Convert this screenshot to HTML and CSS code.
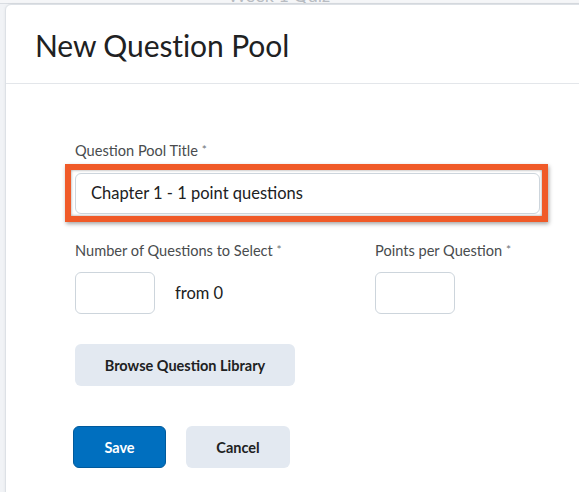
FILE: index.html
```html
<!DOCTYPE html>
<html>
<head>
<meta charset="utf-8">
<link rel="stylesheet" href="styles.css">
</head>
<body>
<div class="page">
  <div class="page-top"><span class="page-title">Week 1 Quiz</span></div>
</div>
<div class="dialog">
  <div class="dialog-header">
    <h1 class="dialog-title">New Question Pool</h1>
  </div>
  <div class="dialog-body">
    <div class="field">
      <label class="label">Question Pool Title <span class="req">*</span></label>
      <div class="highlight">
        <div class="input input-wide">Chapter 1 - 1 point questions</div>
      </div>
    </div>
    <div class="row">
      <div class="field col-left">
        <label class="label">Number of Questions to Select <span class="req">*</span></label>
        <div class="inline">
          <div class="input input-small"></div>
          <span class="from">from 0</span>
        </div>
      </div>
      <div class="field">
        <label class="label">Points per Question <span class="req">*</span></label>
        <div class="input input-small"></div>
      </div>
    </div>
    <button class="btn btn-secondary btn-browse">Browse Question Library</button>
    <div class="actions">
      <button class="btn btn-primary">Save</button>
      <button class="btn btn-secondary btn-cancel">Cancel</button>
    </div>
  </div>
</div>
</body>
</html>
```
FILE: styles.css
```css
* { box-sizing: border-box; }
html, body { margin: 0; padding: 0; }
body {
  width: 579px;
  height: 492px;
  overflow: hidden;
  background: #f1f3f6;
  font-family: Lato, "Noto Sans", sans-serif;
  position: relative;
}
.page-top {
  height: 4px;
  overflow: hidden;
  background: #f5f6f8;
  border-bottom: 1px solid #d9dde2;
}
.page-title {
  display: block;
  margin-left: 228px;
  margin-top: -14px;
  font-size: 18px;
  color: #b8bcc2;
  line-height: 18px;
}
.dialog {
  position: absolute;
  left: 5px;
  top: 4px;
  right: -10px;
  bottom: -10px;
  background: #ffffff;
  border: 1px solid #dde1e6;
  border-radius: 6px;
  box-shadow: 0 0 3px rgba(0,0,0,0.06);
}
.dialog-header {
  height: 79px;
  border-bottom: 1px solid #e3e6ea;
  padding-left: 29px;
  display: flex;
  align-items: center;
}
.dialog-title {
  margin: 0;
  font-weight: 400;
  font-size: 30px;
  color: #202122;
  letter-spacing: -0.1px;
  padding-top: 1px;
}
.dialog-body {
  padding: 57px 0 0 69px;
}
.field { display: flex; flex-direction: column; }
.label {
  font-size: 14.6px;
  color: #494c4e;
  line-height: 17px;
  margin-bottom: 5px;
}
.req { font-size: 12px; color: #6e7477; vertical-align: 2px; }
.highlight {
  width: 483px;
  height: 58px;
  margin-left: -10px;
  border: 6px solid #f05a28;
  box-shadow: 1px 2px 4px rgba(0,0,0,0.35), inset 0 0 3px rgba(0,0,0,0.4);
  padding: 3px 2px 2px 4px;
}
.input {
  background: #ffffff;
  border: 1px solid #cdd5dc;
  border-radius: 6px;
}
.input-wide {
  width: 465px;
  height: 41px;
  padding-left: 15px;
  font-size: 16.5px;
  color: #202122;
  line-height: 39px;
}
.row {
  display: flex;
  margin-top: 19px;
}
.col-left { width: 300px; }
.row .label { margin-bottom: 13px; }
.inline { display: flex; align-items: center; }
.input-small { width: 80px; height: 42px; }
.from {
  margin-left: 20px;
  font-size: 16.5px;
  color: #202122;
}
.btn {
  font-family: Lato, "Noto Sans", sans-serif;
  font-weight: 700;
  font-size: 14.5px;
  border: none;
  border-radius: 6px;
  height: 42px;
  padding: 0;
  cursor: pointer;
  display: block;
}
.btn-secondary { background: #e3e9f1; color: #202122; }
.btn-browse { width: 220px; margin-top: 30px; }
.actions {
  display: flex;
  gap: 20px;
  margin-top: 40px;
  margin-left: -2px;
}
.btn-primary {
  width: 93px;
  background: #006fbf;
  color: #ffffff;
  border: 1px solid #005a9c;
}
.btn-cancel { width: 104px; }
```
